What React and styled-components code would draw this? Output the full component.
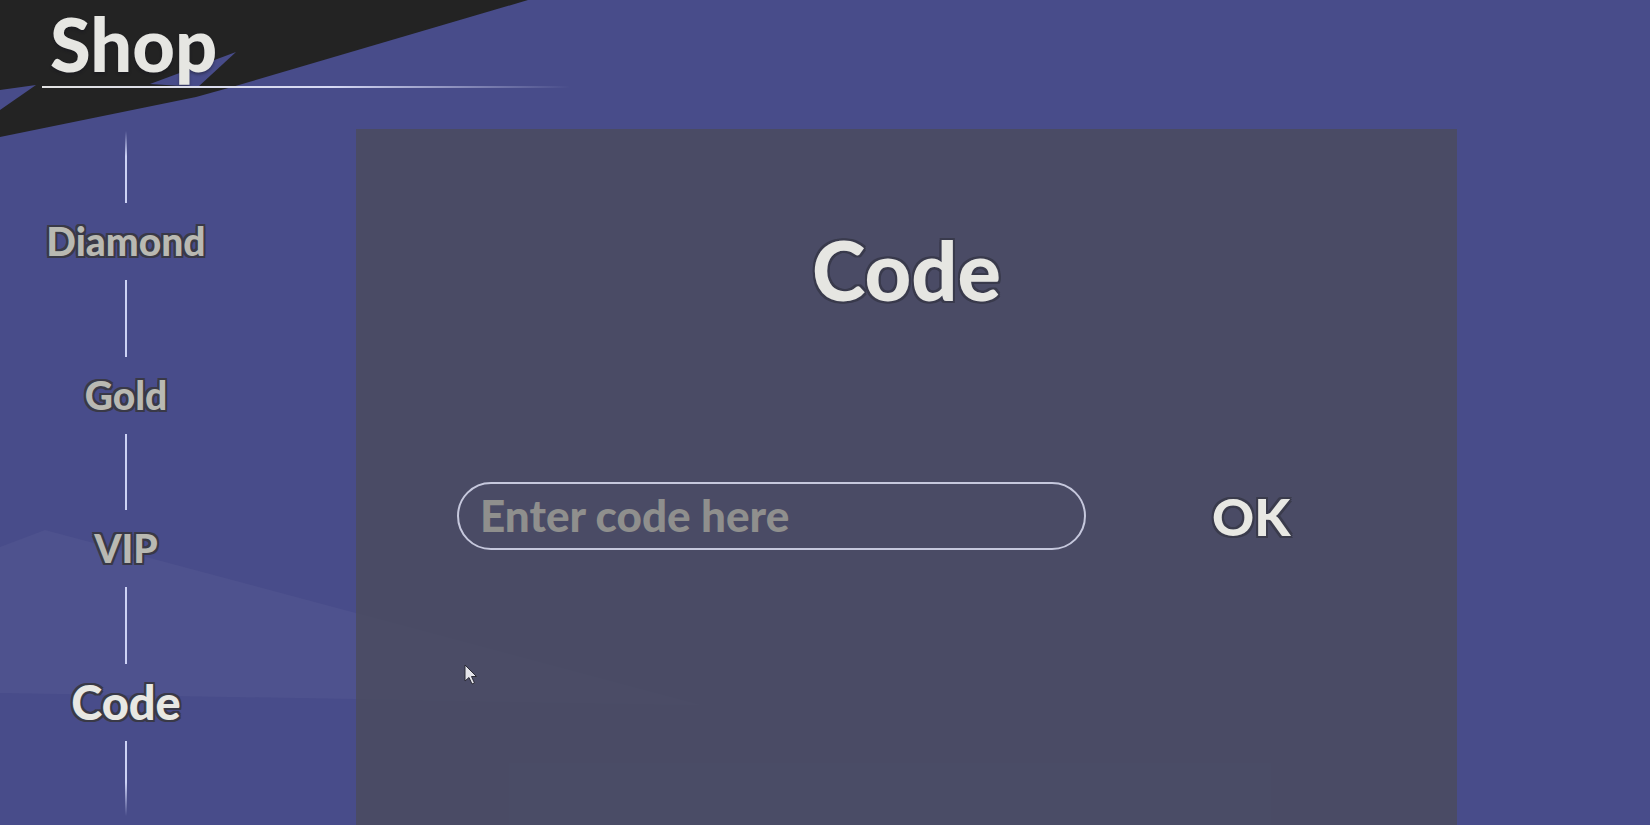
import React from 'react'
import styled, { createGlobalStyle } from 'styled-components'

const GlobalStyle = createGlobalStyle`
    html, body {
        margin: 0;
        padding: 0;
        background: #484c8a;
        font-family: 'Lato', 'Noto Sans', sans-serif;
    }
`

const outline = (c, w) => `
    ${-w}px ${-w}px 0 ${c}, ${w}px ${-w}px 0 ${c}, ${-w}px ${w}px 0 ${c}, ${w}px ${w}px 0 ${c},
    0 ${-w}px 0 ${c}, 0 ${w}px 0 ${c}, ${-w}px 0 0 ${c}, ${w}px 0 0 ${c}
`

const Page = styled.div`
    position: relative;
    width: 1650px;
    height: 825px;
    overflow: hidden;
    background: #484c8a;
`

const Backdrop = styled.svg`
    position: absolute;
    inset: 0;
    width: 100%;
    height: 100%;
    z-index: 0;
`

const Layout = styled.div`
    position: relative;
    z-index: 1;
    display: grid;
    grid-template-columns: 356px 1101px;
    grid-template-rows: 129px 696px;
`

const Header = styled.header`
    grid-column: 1 / 3;
    display: flex;
    flex-direction: column;
    padding: 7px 0 0 42px;
`

const Title = styled.h1`
    margin: 0 0 0 8px;
    font-size: 74px;
    line-height: 1;
    font-weight: 900;
    color: #e6e6e2;
    text-shadow: 0 2px 3px rgba(20, 20, 30, 0.45);
`

const Underline = styled.div`
    margin-top: 5px;
    width: 528px;
    height: 2px;
    background: linear-gradient(to right, #e2e2e2 0%, #d6d9f4 55%, rgba(200, 205, 245, 0) 100%);
`

const Nav = styled.nav`
    display: flex;
    flex-direction: column;
    align-items: center;
    width: 252px;
    padding-top: 2px;
`

const Line = styled.div`
    width: 2px;
    height: ${p => p.$h}px;
    background: ${p =>
        p.$fade === 'top'
            ? 'linear-gradient(to bottom, rgba(205,210,245,0), #cdd2f5 35%)'
            : p.$fade === 'bottom'
            ? 'linear-gradient(to bottom, #cdd2f5 55%, rgba(205,210,245,0))'
            : '#cdd2f5'};
`

const Slot = styled.div`
    height: 77px;
    display: flex;
    align-items: center;
    justify-content: center;
`

const NavLabel = styled.span`
    font-size: ${p => (p.$active ? 47 : 39)}px;
    font-weight: 900;
    line-height: 1;
    color: ${p => (p.$active ? '#e8e8e3' : '#b9b9b2')};
    text-shadow: ${outline('#393947', 2)};
`

const Panel = styled.section`
    background: rgba(74, 76, 96, 0.86);
    display: flex;
    flex-direction: column;
    align-items: center;
    padding-top: 100px;
    box-sizing: border-box;
`

const PanelTitle = styled.h2`
    margin: 0;
    font-size: 81px;
    line-height: 1;
    font-weight: 900;
    color: #e6e6e2;
    text-shadow: ${outline('#393a4c', 2)};
`

const CodeRow = styled.div`
    align-self: flex-start;
    margin: 172px 0 0 101px;
    display: flex;
    align-items: center;
    gap: 126px;
`

const CodeInput = styled.input`
    width: 629px;
    height: 68px;
    box-sizing: border-box;
    border: 2px solid #c6c8dd;
    border-radius: 34px;
    background: transparent;
    padding: 0 0 2px 21px;
    font-family: 'Lato', 'Noto Sans', sans-serif;
    font-size: 44px;
    font-weight: 900;
    color: #e6e6e2;
    outline: none;

    &::placeholder {
        color: #8f8f8d;
    }
`

const OkButton = styled.button`
    border: none;
    background: none;
    padding: 0;
    font-family: 'Lato', 'Noto Sans', sans-serif;
    font-size: 52px;
    font-weight: 900;
    line-height: 1;
    color: #e8e8e3;
    text-shadow: ${outline('#3a3b4c', 2)};
    cursor: pointer;
`

const Cursor = styled.svg`
    position: absolute;
    left: 464px;
    top: 664px;
    z-index: 2;
`

const tabs = ['Diamond', 'Gold', 'VIP', 'Code']
const lines = [72, 77, 76, 77, 75]

const App = () => {
    return (
        <Page>
            <GlobalStyle />
            <Backdrop viewBox="0 0 1650 825" preserveAspectRatio="none">
                <polygon points="0,547 45,530 700,705 0,693" fill="rgba(255,255,255,0.035)" />
                <polygon points="0,0 528,0 232,87 196,97 0,137" fill="#232323" />
                <polygon points="236,52 150,84 198,87" fill="#484c8a" />
                <polygon points="0,90 36,85 0,110" fill="#484c8a" />
            </Backdrop>
            <Layout>
                <Header>
                    <Title>Shop</Title>
                    <Underline />
                </Header>
                <Nav>
                    {tabs.map((t, i) => (
                        <React.Fragment key={t}>
                            <Line $h={lines[i]} $fade={i === 0 ? 'top' : undefined} />
                            <Slot>
                                <NavLabel $active={t === 'Code'}>{t}</NavLabel>
                            </Slot>
                        </React.Fragment>
                    ))}
                    <Line $h={lines[4]} $fade="bottom" />
                </Nav>
                <Panel>
                    <PanelTitle>Code</PanelTitle>
                    <CodeRow>
                        <CodeInput placeholder="Enter code here" />
                        <OkButton>OK</OkButton>
                    </CodeRow>
                </Panel>
            </Layout>
            <Cursor width="14" height="22" viewBox="0 0 14 22">
                <path d="M1 1 L1 17 L5 13.5 L8 20 L10.5 19 L7.5 12.5 L12.5 12.5 Z" fill="#e4e4ea" stroke="#2b2b36" strokeWidth="1" strokeLinejoin="round" />
            </Cursor>
        </Page>
    )
}

export default App
